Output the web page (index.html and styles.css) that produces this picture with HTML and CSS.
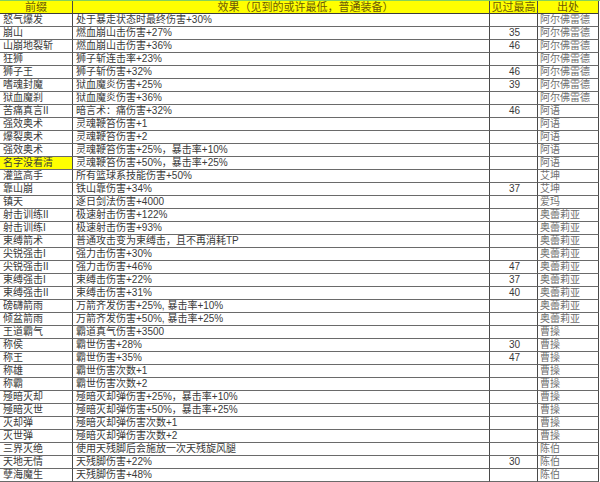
FILE: index.html
```html
<!DOCTYPE html>
<html lang="zh-CN">
<head>
<meta charset="utf-8">
<title>前缀表</title>
<link rel="stylesheet" href="styles.css">
</head>
<body>
<div class="sheet">
  <div class="grid">
    <div class="c h">前缀</div><div class="c h h-eff">效果（见到的或许最低，普通装备）</div><div class="c h">见过最高</div><div class="c h">出处</div>

    <div class="c n">怒气爆发</div><div class="c e">处于暴走状态时最终伤害+30%</div><div class="c v"></div><div class="c s">阿尔佛雷德</div>
    <div class="c n">崩山</div><div class="c e">燃血崩山击伤害+27%</div><div class="c v">35</div><div class="c s">阿尔佛雷德</div>
    <div class="c n">山崩地裂斩</div><div class="c e">燃血崩山击伤害+36%</div><div class="c v">46</div><div class="c s">阿尔佛雷德</div>
    <div class="c n">狂狮</div><div class="c e">狮子斩连击率+23%</div><div class="c v"></div><div class="c s">阿尔佛雷德</div>
    <div class="c n">狮子王</div><div class="c e">狮子斩伤害+32%</div><div class="c v">46</div><div class="c s">阿尔佛雷德</div>
    <div class="c n">嗜魂封魔</div><div class="c e">狱血魔炎伤害+25%</div><div class="c v">39</div><div class="c s">阿尔佛雷德</div>
    <div class="c n">狱血魔刹</div><div class="c e">狱血魔炎伤害+36%</div><div class="c v"></div><div class="c s">阿尔佛雷德</div>
    <div class="c n">苦痛真言II</div><div class="c e">暗言术：痛伤害+32%</div><div class="c v">46</div><div class="c s">阿语</div>
    <div class="c n">强效奥术</div><div class="c e">灵魂鞭笞伤害+1</div><div class="c v"></div><div class="c s">阿语</div>
    <div class="c n">爆裂奥术</div><div class="c e">灵魂鞭笞伤害+2</div><div class="c v"></div><div class="c s">阿语</div>
    <div class="c n">强效奥术</div><div class="c e">灵魂鞭笞伤害+25%，暴击率+10%</div><div class="c v"></div><div class="c s">阿语</div>
    <div class="c n mark">名字没看清</div><div class="c e">灵魂鞭笞伤害+50%，暴击率+25%</div><div class="c v"></div><div class="c s">阿语</div>
    <div class="c n">灌篮高手</div><div class="c e">所有篮球系技能伤害+50%</div><div class="c v"></div><div class="c s">艾坤</div>
    <div class="c n">靠山崩</div><div class="c e">铁山靠伤害+34%</div><div class="c v">37</div><div class="c s">艾坤</div>
    <div class="c n">镇天</div><div class="c e">逐日剑法伤害+4000</div><div class="c v"></div><div class="c s">爱玛</div>
    <div class="c n">射击训练II</div><div class="c e">极速射击伤害+122%</div><div class="c v"></div><div class="c s">奥蕾莉亚</div>
    <div class="c n">射击训练I</div><div class="c e">极速射击伤害+93%</div><div class="c v"></div><div class="c s">奥蕾莉亚</div>
    <div class="c n">束缚箭术</div><div class="c e">普通攻击变为束缚击，且不再消耗TP</div><div class="c v"></div><div class="c s">奥蕾莉亚</div>
    <div class="c n">尖锐强击I</div><div class="c e">强力击伤害+30%</div><div class="c v"></div><div class="c s">奥蕾莉亚</div>
    <div class="c n">尖锐强击II</div><div class="c e">强力击伤害+46%</div><div class="c v">47</div><div class="c s">奥蕾莉亚</div>
    <div class="c n">束缚强击I</div><div class="c e">束缚击伤害+22%</div><div class="c v">37</div><div class="c s">奥蕾莉亚</div>
    <div class="c n">束缚强击II</div><div class="c e">束缚击伤害+31%</div><div class="c v">40</div><div class="c s">奥蕾莉亚</div>
    <div class="c n">磅礴箭雨</div><div class="c e">万箭齐发伤害+25%, 暴击率+10%</div><div class="c v"></div><div class="c s">奥蕾莉亚</div>
    <div class="c n">倾盆箭雨</div><div class="c e">万箭齐发伤害+50%, 暴击率+25%</div><div class="c v"></div><div class="c s">奥蕾莉亚</div>
    <div class="c n">王道霸气</div><div class="c e">霸道真气伤害+3500</div><div class="c v"></div><div class="c s">曹操</div>
    <div class="c n">称侯</div><div class="c e">霸世伤害+28%</div><div class="c v">30</div><div class="c s">曹操</div>
    <div class="c n">称王</div><div class="c e">霸世伤害+35%</div><div class="c v">47</div><div class="c s">曹操</div>
    <div class="c n">称雄</div><div class="c e">霸世伤害次数+1</div><div class="c v"></div><div class="c s">曹操</div>
    <div class="c n">称霸</div><div class="c e">霸世伤害次数+2</div><div class="c v"></div><div class="c s">曹操</div>
    <div class="c n">殛暗灭却</div><div class="c e">殛暗灭却弹伤害+25%，暴击率+10%</div><div class="c v"></div><div class="c s">曹操</div>
    <div class="c n">殛暗灭世</div><div class="c e">殛暗灭却弹伤害+50%，暴击率+25%</div><div class="c v"></div><div class="c s">曹操</div>
    <div class="c n">灭却弹</div><div class="c e">殛暗灭却弹伤害次数+1</div><div class="c v"></div><div class="c s">曹操</div>
    <div class="c n">灭世弹</div><div class="c e">殛暗灭却弹伤害次数+2</div><div class="c v"></div><div class="c s">曹操</div>
    <div class="c n">三界灭绝</div><div class="c e">使用天残脚后会施放一次天残旋风腿</div><div class="c v"></div><div class="c s">陈伯</div>
    <div class="c n">天地无情</div><div class="c e">天残脚伤害+22%</div><div class="c v">30</div><div class="c s">陈伯</div>
    <div class="c n">孽海魔生</div><div class="c e">天残脚伤害+48%</div><div class="c v"></div><div class="c s">陈伯</div>
  </div>
</div>
</body>
</html>
```
FILE: styles.css
```css
html, body {
  margin: 0;
  padding: 0;
  background: #ffffff;
}

body {
  font-family: "Liberation Sans Narrow", "Liberation Sans", "Noto Sans CJK SC", sans-serif;
  font-size: 10px;
  color: #3a3a3a;
}

.sheet {
  width: 600px;
  height: 482px;
  overflow: hidden;
  border-top: 1px solid #86d25a;
  box-sizing: border-box;
}

.grid {
  display: grid;
  grid-template-columns: 73px 417px 48px 61px;
  grid-auto-rows: 13px;
  width: 599px;
}

.c {
  box-sizing: border-box;
  border-right: 1px solid #4a4a4a;
  border-bottom: 1px solid #6a6a6a;
  line-height: 12px;
  white-space: nowrap;
  overflow: hidden;
}

.h {
  background: #ffff00;
  color: #6b5a08;
  font-size: 11px;
  text-align: center;
  border-bottom-color: #3c3c3c;
}

.h-eff {
  padding-left: 49px;
}

.n {
  padding-left: 3px;
}

.mark {
  background: #ffff00;
}

.e {
  padding-left: 3px;
}

.v {
  text-align: center;
  padding-left: 2px;
}

.s {
  padding-left: 2px;
  color: #707070;
}
```
